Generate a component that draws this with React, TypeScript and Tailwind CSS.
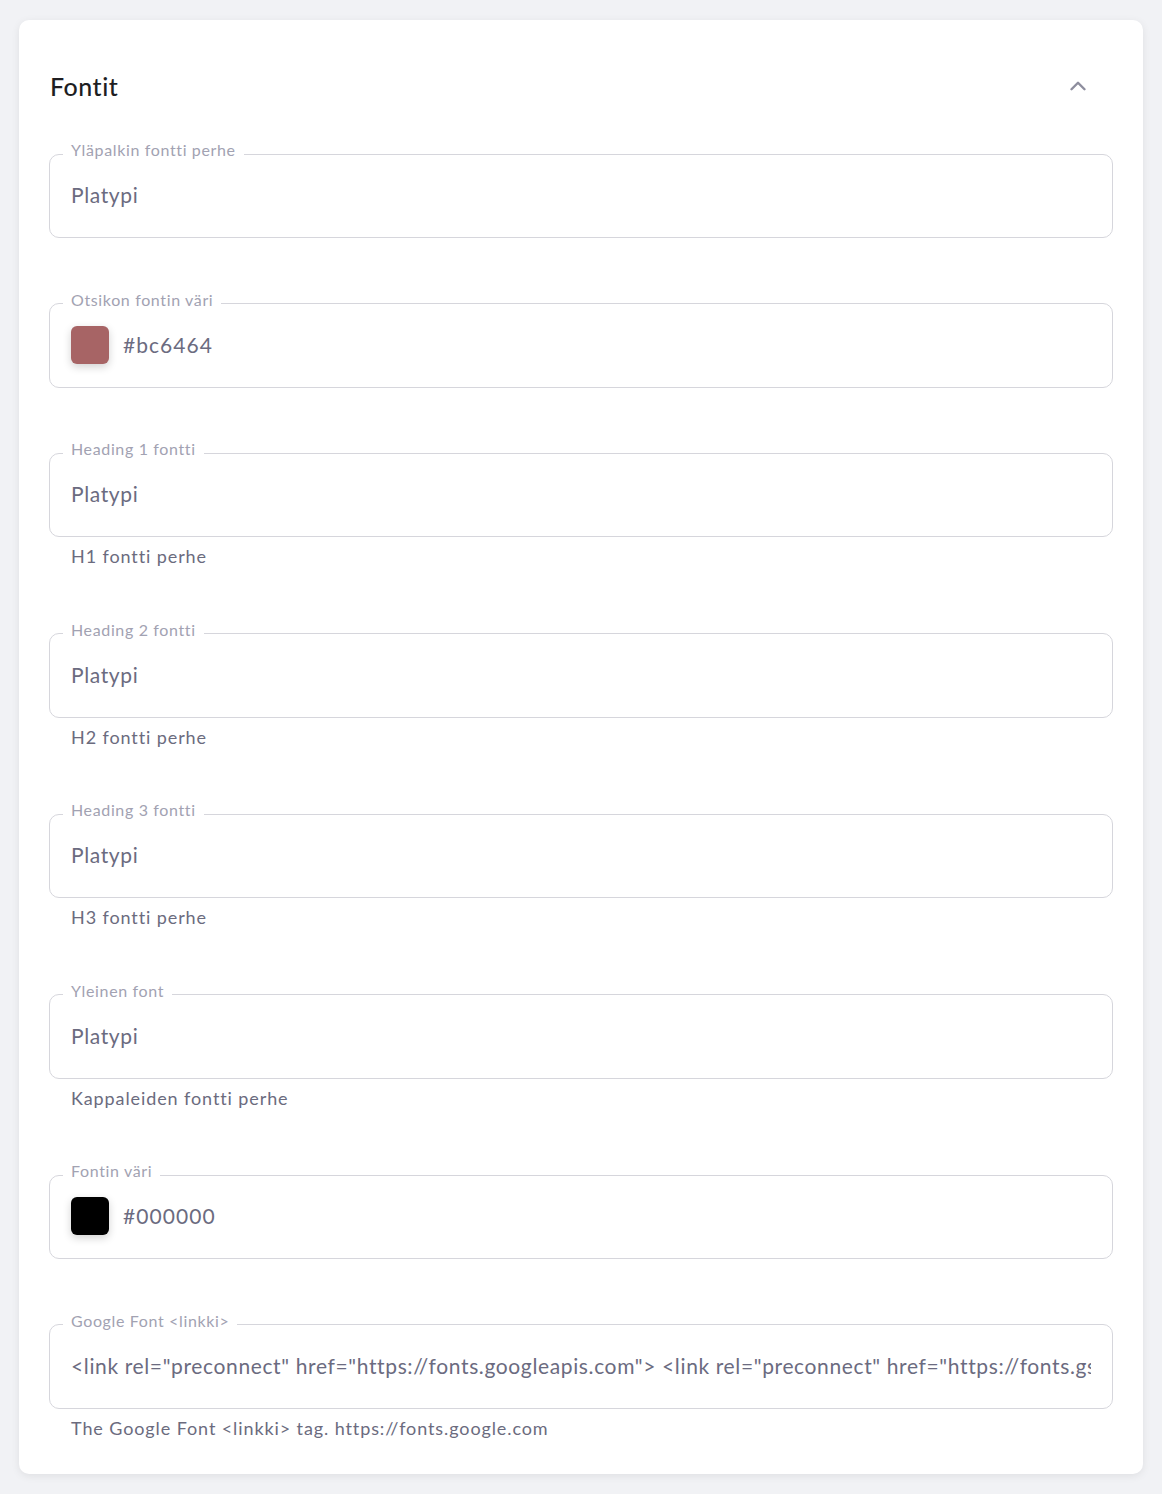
import { ChevronUp } from 'lucide-react';

type Field = {
  label: string;
  value: string;
  helper?: string;
  swatch?: string;
};

const fields: Field[] = [
  { label: 'Yläpalkin fontti perhe', value: 'Platypi' },
  { label: 'Otsikon fontin väri', value: '#bc6464', swatch: '#a76465' },
  { label: 'Heading 1 fontti', value: 'Platypi', helper: 'H1 fontti perhe' },
  { label: 'Heading 2 fontti', value: 'Platypi', helper: 'H2 fontti perhe' },
  { label: 'Heading 3 fontti', value: 'Platypi', helper: 'H3 fontti perhe' },
  { label: 'Yleinen font', value: 'Platypi', helper: 'Kappaleiden fontti perhe' },
  { label: 'Fontin väri', value: '#000000', swatch: '#000000' },
  {
    label: 'Google Font <linkki>',
    value:
      '<link rel="preconnect" href="https://fonts.googleapis.com"> <link rel="preconnect" href="https://fonts.gstatic.com" crossorigin>',
    helper: 'The Google Font <linkki> tag. https://fonts.google.com',
  },
];

function OutlinedField({ field }: { field: Field }) {
  return (
    <div>
      <fieldset className="border border-[#d6d6dc] rounded-[10px] px-[13px] m-0 min-w-0">
        <legend className="px-[8px] pb-[8px] text-[16px] leading-[20px] tracking-[0.04em] text-[#a2a2b2]">
          {field.label}
        </legend>
        {field.swatch ? (
          <div className="h-[69px] mx-[8px] pt-[8px] flex items-start gap-[14px]">
            <span
              className="w-[38px] h-[38px] rounded-[6px] shadow-[0_3px_8px_rgba(0,0,0,0.18)] shrink-0"
              style={{ backgroundColor: field.swatch }}
            />
            <span className="text-[21px] leading-[38px] tracking-[0.05em] text-[#6b6b80]">{field.value}</span>
          </div>
        ) : (
          <div className="h-[69px] mx-[8px] pt-[13px] overflow-hidden whitespace-nowrap text-[21px] leading-[28px] tracking-[0.03em] text-[#6b6b80]">
            {field.value}
          </div>
        )}
      </fieldset>
      {field.helper && (
        <p className="mt-[7px] px-[22px] text-[18px] leading-[24px] tracking-[0.05em] text-[#6b6b7e]">
          {field.helper}
        </p>
      )}
    </div>
  );
}

export default function App() {
  return (
    <div className="min-h-screen bg-[#f1f2f5] px-[19px] pt-[20px] pb-[20px] font-['Lato','Liberation_Sans',sans-serif]">
      <div className="bg-white rounded-[10px] shadow-[0_2px_8px_rgba(0,0,0,0.08)] px-[30px] pt-[50px] pb-[34px]">
        {/* Otsikko */}
        <div className="flex items-center justify-between pl-[1px] pr-[22px] h-[32px]">
          <h2 className="text-[25px] leading-[32px] font-medium tracking-[0.02em] text-[#1e1e22]">Fontit</h2>
          <ChevronUp size={26} strokeWidth={2.25} className="text-[#8e8e9e]" />
        </div>

        <div className="mt-[38px] flex flex-col gap-[51.5px]">
          {fields.map((f) => (
            <OutlinedField key={f.label} field={f} />
          ))}
        </div>
      </div>
    </div>
  );
}
